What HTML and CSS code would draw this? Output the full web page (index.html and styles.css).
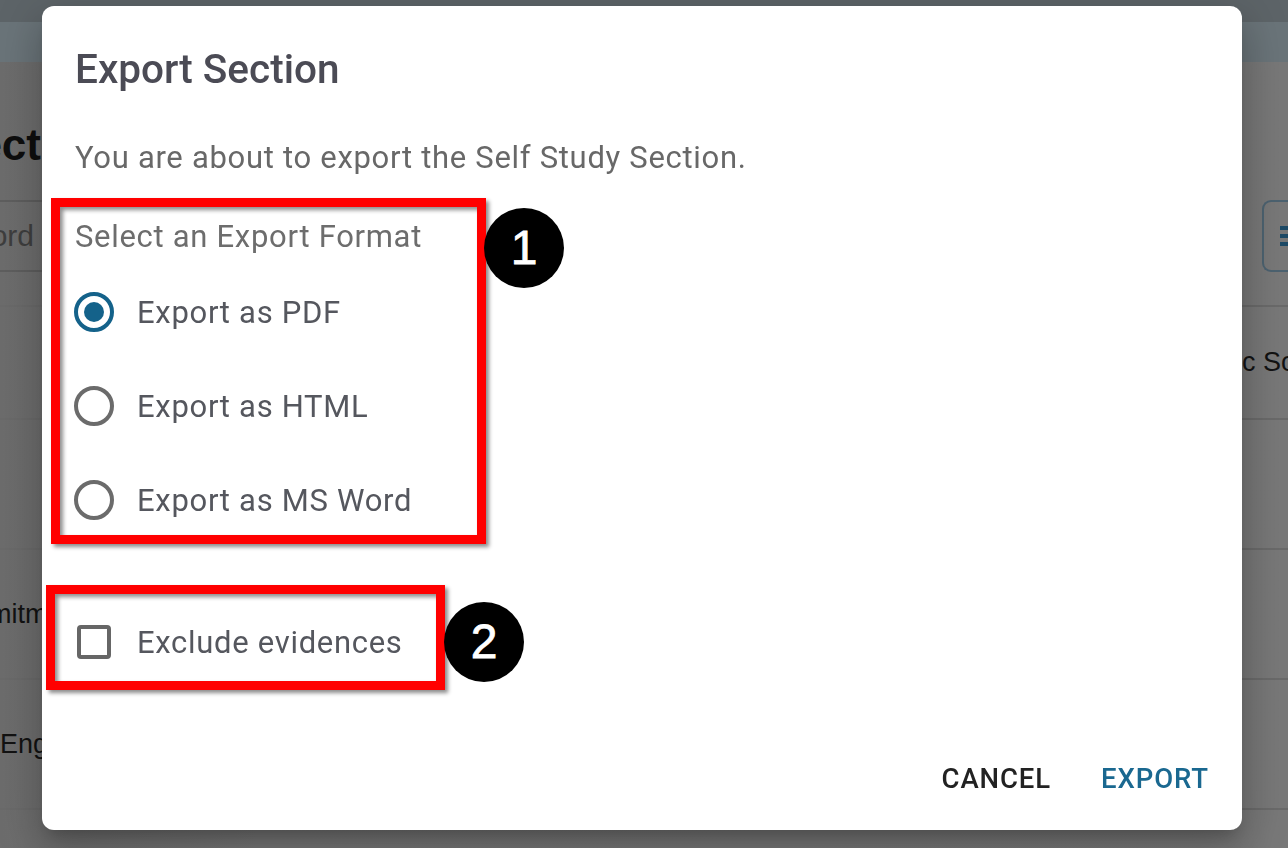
FILE: index.html
```html
<!DOCTYPE html>
<html lang="en">
<head>
<meta charset="utf-8">
<title>Export Section</title>
<link rel="stylesheet" href="styles.css">
</head>
<body>
<div class="page">
  <header class="topbar">
    <div class="topbar-strip"></div>
    <div class="topbar-main"></div>
  </header>
  <main class="content">
    <div class="title-row">
      <div class="clip-end title-cell"><h1 class="page-title">Project</h1></div>
    </div>
    <div class="toolbar">
      <div class="search">
        <div class="clip-end search-cell"><span class="search-text">Keyword</span></div>
      </div>
      <button class="filter-btn" type="button" aria-label="Filter">
        <svg width="10" height="24" viewBox="0 0 10 24"><path d="M2 4h8M2 12h8M2 20h8" stroke="#1d4a66" stroke-width="4" fill="none"/></svg>
      </button>
    </div>
    <div class="table">
      <div class="row row-1"><div class="cell-name"></div><div class="cell-right">Academic Scope</div></div>
      <div class="row"><div class="cell-name"></div><div class="cell-right"></div></div>
      <div class="row"><div class="cell-name clip-end commit-cell">Commitment</div><div class="cell-right"></div></div>
      <div class="row"><div class="cell-name">Engagement</div><div class="cell-right"></div></div>
    </div>
  </main>
</div>

<div class="overlay">
  <div class="dialog" role="dialog" aria-labelledby="dlg-title">
    <h2 class="dialog-title" id="dlg-title">Export Section</h2>
    <p class="dialog-text">You are about to export the Self Study Section.</p>

    <div class="format-group">
      <div class="group-label">Select an Export Format</div>
      <label class="option">
        <span class="radio checked"><span class="dot"></span></span>
        <span class="option-label">Export as PDF</span>
      </label>
      <label class="option">
        <span class="radio"></span>
        <span class="option-label">Export as HTML</span>
      </label>
      <label class="option">
        <span class="radio"></span>
        <span class="option-label">Export as MS Word</span>
      </label>
    </div>

    <label class="option check-option">
      <span class="checkbox"></span>
      <span class="option-label">Exclude evidences</span>
    </label>

    <div class="dialog-actions">
      <button class="btn btn-cancel" type="button">CANCEL</button>
      <button class="btn btn-export" type="button">EXPORT</button>
    </div>

    <div class="mark mark-1"></div>
    <div class="mark mark-2"></div>
    <div class="badge badge-1">1</div>
    <div class="badge badge-2">2</div>
  </div>
</div>
</body>
</html>
```

FILE: styles.css
```css
html, body {
  margin: 0;
  padding: 0;
}
body {
  width: 1288px;
  height: 848px;
  overflow: hidden;
  background: #707070;
  font-family: "Liberation Sans", Arial, sans-serif;
}

/* ---------- background page (dimmed) ---------- */
.page {
  width: 1288px;
  height: 848px;
  overflow: hidden;
  display: flex;
  flex-direction: column;
  background: linear-gradient(90deg, #6c6c6c 0%, #767676 20%, #787878 100%);
}
.topbar {
  display: flex;
  flex-direction: column;
}
.topbar-strip {
  height: 22px;
  background: #5d6468;
}
.topbar-main {
  height: 40px;
  background: #6a7479;
}
.content {
  flex: 1;
  display: flex;
  flex-direction: column;
}
.clip-end {
  display: flex;
  justify-content: flex-end;
  white-space: nowrap;
}
.title-row {
  height: 138px;
  box-sizing: border-box;
  padding-top: 59px;
}
.title-cell {
  width: 41px;
}
.page-title {
  margin: 0;
  font-size: 44px;
  line-height: 48px;
  font-weight: 700;
  color: #0e0e0e;
}
.toolbar {
  height: 72px;
  display: flex;
  justify-content: space-between;
  margin-bottom: 33px;
}
.search {
  width: 420px;
  border-top: 2px solid #5e5e5e;
  border-bottom: 2px solid #5e5e5e;
  display: flex;
  align-items: center;
}
.search-cell {
  width: 34px;
}
.search-text {
  font-size: 30px;
  color: #3e3e3e;
}
.filter-btn {
  width: 26px;
  height: 72px;
  border: 2px solid #4c6270;
  border-right: 0;
  border-radius: 9px 0 0 9px;
  background: transparent;
  display: flex;
  align-items: center;
  justify-content: flex-end;
  padding: 0;
  box-sizing: border-box;
}
.table {
  display: flex;
  flex-direction: column;
  border-top: 2px solid #6a6a6a;
}
.row {
  height: 130px;
  display: flex;
  align-items: center;
  border-bottom: 2px solid #6a6a6a;
  box-sizing: border-box;
  font-size: 27px;
  color: #121212;
}
.row-1 {
  height: 113px;
}
.cell-name {
  flex: 1;
  white-space: nowrap;
}
.commit-cell {
  flex: 0 0 85px;
  min-width: 0;
  margin-right: auto;
}
.cell-right {
  width: 151px;
  flex-shrink: 0;
  white-space: nowrap;
  overflow: hidden;
}

/* ---------- dialog ---------- */
.overlay {
  position: fixed;
  inset: 0;
  display: flex;
  justify-content: center;
  align-items: flex-start;
  padding: 6px 4px 0 0;
}
.dialog {
  position: relative;
  width: 1200px;
  height: 824px;
  box-sizing: border-box;
  background: #fff;
  border-radius: 12px;
  padding: 0 0 22px 33px;
  display: flex;
  flex-direction: column;
  font-family: Roboto, "Noto Sans", sans-serif;
  box-shadow: 0 11px 15px -7px rgba(0,0,0,.2), 0 24px 38px 3px rgba(0,0,0,.14), 0 9px 46px 8px rgba(0,0,0,.12);
}
.dialog-title {
  margin: 0;
  padding-top: 33px;
  font-size: 40.5px;
  line-height: 60px;
  font-weight: 500;
  color: #4b4b55;
}
.dialog-text {
  margin: 37px 0 0;
  font-size: 31px;
  letter-spacing: 0.7px;
  line-height: 44px;
  color: #686868;
}
.format-group {
  display: flex;
  flex-direction: column;
  margin-top: 35px;
}
.group-label {
  font-size: 31px;
  letter-spacing: 0.7px;
  line-height: 44px;
  color: #6d6d6d;
  margin-bottom: 6px;
}
.option {
  height: 94px;
  display: flex;
  align-items: center;
  cursor: pointer;
}
.radio {
  width: 40px;
  height: 40px;
  box-sizing: border-box;
  border: 4px solid #6b6b6b;
  border-radius: 50%;
  margin-left: -1px;
  margin-right: 23px;
  display: flex;
  align-items: center;
  justify-content: center;
}
.radio.checked {
  border-color: #14628a;
}
.dot {
  width: 20px;
  height: 20px;
  border-radius: 50%;
  background: #14628a;
}
.option-label {
  font-size: 31px;
  letter-spacing: 0.7px;
  color: #55575e;
}
.check-option {
  margin-top: 48px;
}
.checkbox {
  width: 34px;
  height: 34px;
  box-sizing: border-box;
  border: 4px solid #666;
  border-radius: 4px;
  margin-left: 2px;
  margin-right: 26px;
}
.dialog-actions {
  margin-top: auto;
  display: flex;
  justify-content: flex-end;
  gap: 18px;
  padding-right: 17px;
}
.btn {
  height: 60px;
  padding: 0 16px;
  border: 0;
  background: transparent;
  font-family: Roboto, "Noto Sans", sans-serif;
  font-size: 27.5px;
  font-weight: 500;
  letter-spacing: 0.9px;
}
.btn-cancel {
  color: #222;
}
.btn-export {
  color: #1a6890;
}

/* ---------- annotation overlays ---------- */
.mark {
  position: absolute;
  box-sizing: border-box;
  border: 9px solid #ff0000;
  box-shadow: 3px 3px 4px rgba(0,0,0,.45), inset 3px 3px 4px rgba(0,0,0,.45);
}
.mark-1 {
  left: 9px;
  top: 192px;
  width: 435px;
  height: 346px;
}
.mark-2 {
  left: 4px;
  top: 579px;
  width: 399px;
  height: 105px;
}
.badge {
  position: absolute;
  width: 80px;
  height: 80px;
  border-radius: 50%;
  background: #000;
  color: #fff;
  font-family: "Liberation Sans", Arial, sans-serif;
  font-size: 48px;
  line-height: 80px;
  text-align: center;
  -webkit-text-stroke: 0.8px #fff;
}
.badge-1 {
  left: 442px;
  top: 202px;
}
.badge-2 {
  left: 402px;
  top: 596px;
}
```
